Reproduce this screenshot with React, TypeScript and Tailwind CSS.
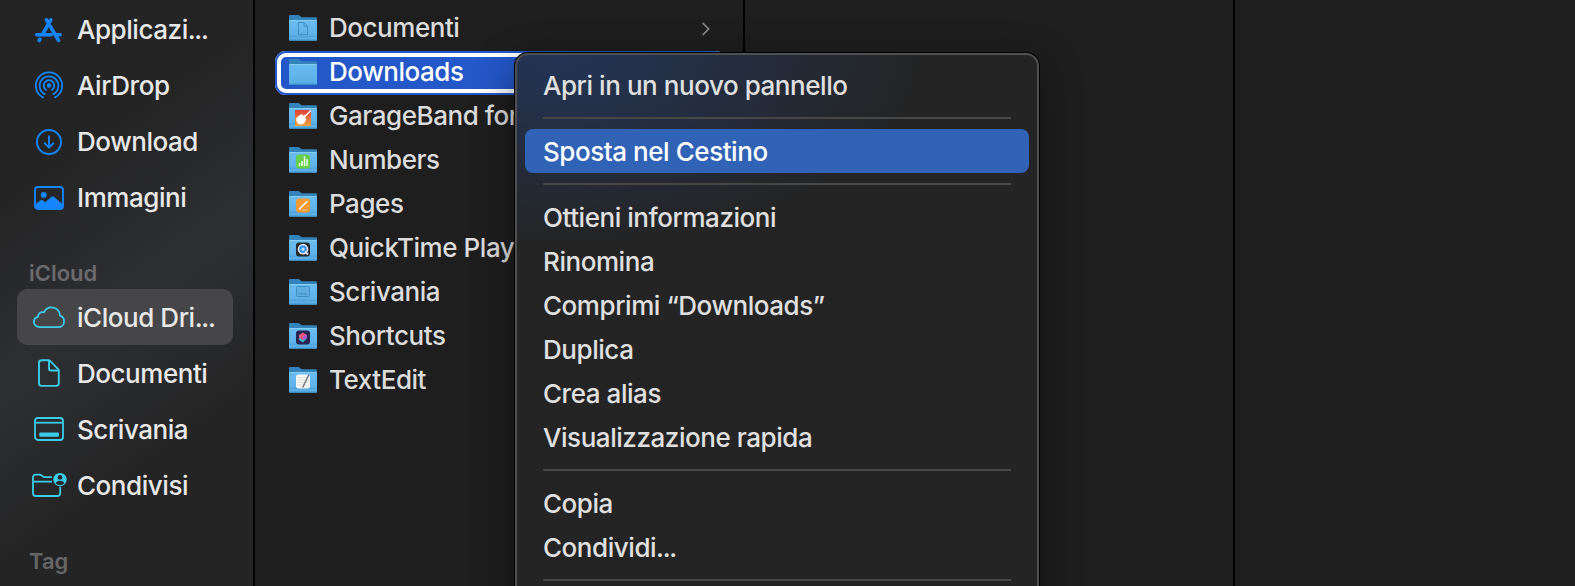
import React from 'react';

type IconProps = { className?: string };

const AppsIcon: React.FC<IconProps> = ({ className }) => (
  <svg className={className} viewBox="0 0 32 32" fill="none" stroke="currentColor" strokeWidth="3.6" strokeLinecap="round">
    <path d="M17.8 5.800 9.800 19.800M13.500 5.800l2 3.400M17.200 12.200l8.300 14.200M3.800 20.700h14.400M24.200 20.700h3M7 25.200l-.8 1.300" />
  </svg>
);

const AirDropIcon: React.FC<IconProps> = ({ className }) => (
  <svg className={className} viewBox="0 0 32 32" fill="none" stroke="currentColor" strokeWidth="1.8" strokeLinecap="round">
    <circle cx="16" cy="15.500" r="2.200" fill="currentColor" stroke="none" />
    <path d="M13.100 19.900a5.300 5.300 0 1 1 5.800 0" />
    <path d="M11.600 24.100a9.400 9.400 0 1 1 8.800 0" />
    <path d="M10 27.400a13.200 13.200 0 1 1 12 0" />
  </svg>
);

const DownloadIcon: React.FC<IconProps> = ({ className }) => (
  <svg className={className} viewBox="0 0 32 32" fill="none" stroke="currentColor" strokeWidth="1.9" strokeLinecap="round" strokeLinejoin="round">
    <circle cx="16" cy="16" r="12" />
    <path d="M16 10.200v11.200M11.600 17.200l4.400 4.400 4.400-4.400" />
  </svg>
);

const PhotoIcon: React.FC<IconProps> = ({ className }) => (
  <svg className={className} viewBox="0 0 32 32" fill="none">
    <rect x="2" y="5" width="28" height="22" rx="3" stroke="currentColor" strokeWidth="1.9" />
    <circle cx="10.700" cy="13" r="3" fill="currentColor" />
    <path d="M2 22.500 7.600 18.300q1-.7 2 0l2.600 2 6.400-5.500q1.100-.9 2.200 0L30 22.500V25q0 2-3 2H5q-3 0-3-2Z" fill="currentColor" />
  </svg>
);

const CloudIcon: React.FC<IconProps> = ({ className }) => (
  <svg className={className} viewBox="0 0 32 32" fill="none" stroke="currentColor" strokeWidth="1.8" strokeLinejoin="round">
    <path d="M7 26.200C3.500 26.200.9 23.900.9 20.900c0-2.500 1.700-4.500 4.100-5.100-.1-3.200 2.900-5.300 5.900-4.400C12.300 8.100 15.100 6.300 18.400 6.300c4.800 0 8.400 3.500 8.600 8.400 2.500.9 4.100 3 4.100 5.700 0 3.300-2.600 5.800-6.100 5.800Z" />
  </svg>
);

const DocumentIcon: React.FC<IconProps> = ({ className }) => (
  <svg className={className} viewBox="0 0 32 32" fill="none" stroke="currentColor" strokeWidth="1.9" strokeLinejoin="round">
    <path d="M8.600 3.200h6.800q1 0 1.700.7l8 8.200q.7.700.7 1.700v12.500q0 2.600-2.600 2.600H8.600Q6 28.900 6 26.300V5.800q0-2.600 2.600-2.600Z" />
    <path d="M16 3.600v8.100q0 1.800 1.800 1.800h8" />
  </svg>
);

const DesktopIcon: React.FC<IconProps> = ({ className }) => (
  <svg className={className} viewBox="0 0 32 32" fill="none" stroke="currentColor" strokeWidth="1.8">
    <rect x="2" y="5" width="28" height="22" rx="3" />
    <path d="M2 9.700h28" />
    <rect x="6.300" y="19.500" width="19.600" height="4.300" rx="1" fill="currentColor" stroke="none" />
  </svg>
);

const SharedFolderIcon: React.FC<IconProps> = ({ className }) => (
  <svg className={className} viewBox="0 0 36 32" fill="none" stroke="currentColor" strokeWidth="1.8" strokeLinejoin="round">
    <path d="M21 8.100h-7.300q-1 0-1.800-.6l-1.500-1.200q-.8-.7-2-.7H4.800Q2 5.600 2 8.400v15.800Q2 27 4.800 27h21.600q2.800 0 2.800-2.800v-6.400M2 12.600h19" />
    <circle cx="29" cy="10.600" r="6.700" fill="currentColor" stroke="none" />
    <circle cx="29" cy="8.400" r="2.300" fill="#272829" stroke="none" />
    <path d="M24.700 14.200q.8-2.500 4.300-2.500t4.300 2.500q-1.700 1.900-4.300 1.900t-4.300-1.900Z" fill="#272829" stroke="none" />
  </svg>
);

const ChevronIcon: React.FC<IconProps> = ({ className }) => (
  <svg className={className} viewBox="0 0 8 14" fill="none" stroke="currentColor" strokeWidth="1.7" strokeLinecap="round" strokeLinejoin="round">
    <path d="m1.200 1.500 5.500 5.500-5.500 5.500" />
  </svg>
);

// Small artwork printed on the front of each folder
const emblems: Record<string, React.ReactNode> = {
  documents: (
    <path d="M9.500 8.500h5.500l3.500 3.500v8.500h-9ZM15 8.500v3.700h3.500" fill="none" stroke="#3f8fc4" strokeWidth="1" />
  ),
  garageband: (
    <>
      <rect x="6" y="8" width="16" height="16" fill="url(#garage)" />
      <path d="m21.300 9-5.500 5.500" stroke="#fff" strokeWidth="1.500" strokeLinecap="round" />
      <path d="M8.500 14.800c1.500-.4 3-2.700 4.800-2.500l.9 1.600 1.300-1.200 1.700 1.900-1.200 1.200 1.100 1c.2 1.500-1 2.400-1.400 3.500-.9 2.200-4.500 2.900-6.700 1.300-2-1.700-2.400-5.800-.5-6.800Z" fill="#fff" />
    </>
  ),
  numbers: (
    <>
      <rect x="7" y="8.500" width="14" height="14" rx="3" fill="#67cf4c" />
      <path d="M10.500 20v-3M13 20v-5M15.500 20v-9.500M18 20v-7" stroke="#fff" strokeWidth="1.400" />
    </>
  ),
  pages: (
    <>
      <rect x="7" y="8.500" width="14" height="14" rx="3" fill="#f49b35" />
      <path d="m10.500 19 7.500-7.500" stroke="#fff" strokeWidth="1.500" strokeLinecap="round" />
      <path d="M13 20h5" stroke="#f9c98c" strokeWidth=".8" />
    </>
  ),
  quicktime: (
    <>
      <rect x="7" y="8.500" width="14" height="14" rx="3" fill="#26282c" />
      <circle cx="14" cy="15.200" r="4.500" fill="#2b8df2" stroke="#dde1e6" strokeWidth="1.700" />
      <circle cx="14" cy="15.200" r="1.700" fill="#bfe2ff" />
      <path d="m16 17.500 3 3" stroke="#dde1e6" strokeWidth="2" />
    </>
  ),
  desktop: (
    <>
      <rect x="7.500" y="8.500" width="13" height="10" rx="1.200" fill="#62ade0" stroke="#3f8fc4" />
      <path d="M10 15.800h8" stroke="#3f8fc4" strokeWidth="1.300" />
    </>
  ),
  shortcuts: (
    <>
      <rect x="7" y="8.500" width="14" height="14" rx="3" fill="#272453" />
      <path d="m14 14 4 2.300-4 4.200-4-2.600v-2Z" fill="#3fb3c9" />
      <path d="m14 10.500 4 2.600v2.600L14 18l-4-2.500v-2.400Z" fill="#ee5a7e" />
      <path d="m14 13.900 4-1v2.700L14 18Z" fill="#b052d8" />
    </>
  ),
  textedit: (
    <>
      <rect x="7" y="8.500" width="14" height="14" rx="2.500" fill="#f5f5f3" />
      <path d="M8 11.500h12M8 14h12M8 16.500h12M8 19h12" stroke="#d3d3d3" strokeWidth=".6" />
      <path d="M19.800 8.700 13.700 21.500" stroke="#787b80" strokeWidth="1.500" />
    </>
  ),
};

const FolderIcon: React.FC<{ emblem?: string }> = ({ emblem }) => (
  <svg className="mb-[2px] h-7 w-7 shrink-0" viewBox="0 0 28 28">
    <path d="M0 2.200Q0 1 1.200 1h7.600q.9 0 1.600.6l1.600 1.200q.5.400 1.200.4H26.800Q28 3.200 28 4.400V10H0Z" fill="#3583bb" />
    <path d="M0 7.200Q0 6 1.200 6h25.600Q28 6 28 7.200v18.300q0 1.200-1.200 1.200H1.200Q0 26.700 0 25.500Z" fill="url(#folder)" />
    <path d="M.6 6.500h26.800" stroke="#84cdf7" strokeWidth=".9" />
    {emblem && <path d="M0 22.300h28" stroke="#4a9dd5" strokeWidth=".8" />}
    <path d="M.4 26.200h27.200" stroke="#3b8ac0" strokeWidth=".9" />
    {emblem && emblems[emblem]}
  </svg>
);

// Tightens the trailing ellipsis, which Inter sets rather wide
const Label: React.FC<{ text: string }> = ({ text }) =>
  text.endsWith('…') ? (
    <>
      {text.slice(0, -1)}
      <span className="tracking-[-1.3px]">...</span>
    </>
  ) : (
    <>{text}</>
  );

const SidebarItem: React.FC<{ icon: React.FC<IconProps>; label: string; color: string; active?: boolean; wide?: boolean; nudge?: string }> = ({ icon: Icon, label, color, active, wide, nudge = '' }) => (
  <li className={`flex h-14 w-[216px] items-center rounded-[10px] ${active ? 'bg-[#464649]' : ''}`}>
    <span className={`flex w-[60px] shrink-0 ${wide ? 'pl-[14px]' : 'pl-4'} ${color}`}>
      <Icon className={wide ? 'h-8 w-9' : 'h-8 w-8'} />
    </span>
    <span className={`whitespace-nowrap text-[#e8e8e8] ${nudge}`}>
      <Label text={label} />
    </span>
  </li>
);

const places = [
  { icon: AppsIcon, label: 'Applicazi…' },
  { icon: AirDropIcon, label: 'AirDrop' },
  { icon: DownloadIcon, label: 'Download' },
  { icon: PhotoIcon, label: 'Immagini' },
];

const cloudPlaces = [
  { icon: CloudIcon, label: 'iCloud Dri…', active: true },
  { icon: DocumentIcon, label: 'Documenti' },
  { icon: DesktopIcon, label: 'Scrivania' },
  { icon: SharedFolderIcon, label: 'Condivisi', wide: true },
];

const folders = [
  { name: 'Documenti', emblem: 'documents', chevron: true },
  { name: 'Downloads', selected: true },
  { name: 'GarageBand for iOS', emblem: 'garageband' },
  { name: 'Numbers', emblem: 'numbers' },
  { name: 'Pages', emblem: 'pages' },
  { name: 'QuickTime Player', emblem: 'quicktime' },
  { name: 'Scrivania', emblem: 'desktop' },
  { name: 'Shortcuts', emblem: 'shortcuts' },
  { name: 'TextEdit', emblem: 'textedit' },
];

const menuGroups = [
  ['Apri in un nuovo pannello'],
  ['Sposta nel Cestino'],
  ['Ottieni informazioni', 'Rinomina', 'Comprimi “Downloads”', 'Duplica', 'Crea alias', 'Visualizzazione rapida'],
  ['Copia', 'Condividi…'],
];

const Sidebar: React.FC = () => (
  <aside className="w-[255px] shrink-0 border-r-2 border-black bg-[#242424] bg-[linear-gradient(145deg,#242424_26%,#2d2e32_49%,#2c2d30_56%,#242424_75%)] pl-[17px] pt-[2px]">
    <ul>
      {places.map((p) => (
        <SidebarItem key={p.label} {...p} color="text-[#1485fb]" />
      ))}
    </ul>
    <h2 className="flex h-[63px] items-end pb-[2px] pl-3 text-[22px] leading-[28px] font-semibold tracking-normal text-[#6a6a6c]">iCloud</h2>
    <ul>
      {cloudPlaces.map((p) => (
        <SidebarItem key={p.label} {...p} color="text-[#3bcde8]" nudge="pt-[2px]" />
      ))}
    </ul>
    <h2 className="flex h-[63px] items-end pb-px pl-3 text-[22px] leading-[28px] font-semibold tracking-normal text-[#666667]">Tag</h2>
  </aside>
);

const ContextMenu: React.FC = () => (
  <div className="absolute left-[515px] top-[53px] h-[620px] w-[524px] rounded-[13px] border-2 border-[#505051] bg-[#242424] bg-[radial-gradient(ellipse_370px_190px_at_40px_0px,#233455_0%,#242f45_35%,#242424_100%)] px-2 pt-2 shadow-[0_0_0_1px_#000,0_12px_40px_rgba(0,0,0,0.45)]">
    {menuGroups.map((group, i) => (
      <React.Fragment key={group[0]}>
        {group.map((label) => (
          <div
            key={label}
            className={`flex h-11 items-center whitespace-nowrap rounded-lg pl-[18px] pt-[2px] ${i === 1 ? 'bg-[#3062b5] text-white' : 'text-[#e0e0e0]'}`}
          >
            <Label text={label} />
          </div>
        ))}
        <div className="mx-[18px] my-[10px] h-[2px] bg-[#474748]" />
      </React.Fragment>
    ))}
  </div>
);

export default function App() {
  return (
    <div className="relative flex h-[586px] w-[1575px] overflow-hidden bg-[#1e1e1e] font-['Inter',sans-serif] text-[26px] leading-[32px] font-[450] tracking-[-0.45px] antialiased">
      <svg className="absolute h-0 w-0">
        <defs>
          <linearGradient id="folder" x1="0" y1="0" x2="0" y2="1">
            <stop offset="0" stopColor="#6bbdf0" />
            <stop offset="1" stopColor="#58ade4" />
          </linearGradient>
          <linearGradient id="garage" x1="0" y1="0" x2="0" y2="1">
            <stop offset="0" stopColor="#df3f3b" />
            <stop offset="1" stopColor="#f2a53c" />
          </linearGradient>
        </defs>
      </svg>

      <Sidebar />

      <main className="w-[490px] shrink-0 border-r-2 border-black pt-[7px]">
        {folders.map((f) => (
          <div
            key={f.name}
            className={`ml-5 mr-[17px] flex h-11 items-center pl-[14px] ${f.selected ? 'rounded-[11px] bg-[#2457c8] text-white shadow-[inset_0_0_0_2px_#2457c8,inset_0_0_0_6px_#fff]' : 'text-[#dcdcdc]'}`}
          >
            <FolderIcon emblem={f.emblem} />
            <span className="ml-3 flex-1 whitespace-nowrap pb-[2px]">{f.name}</span>
            {f.chevron && <ChevronIcon className="mr-4 h-[14px] w-2 text-[#8b8b8b]" />}
          </div>
        ))}
      </main>

      <section className="w-[490px] shrink-0 border-r-2 border-black" />
      <section className="flex-1" />

      <ContextMenu />
    </div>
  );
}
